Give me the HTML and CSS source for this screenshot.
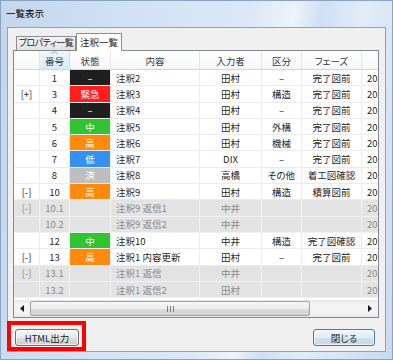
FILE: index.html
```html
<!DOCTYPE html>
<html>
<head>
  <meta charset="utf-8">
  <title>一覧表示</title>
  <link rel="stylesheet" href="styles.css">
</head>
<body>
  <div class="window">
    <div class="titlebar">一覧表示</div>

    <div class="client">
      <div class="tabs">
        <div class="tab">プロパティ一覧</div>
        <div class="tab active">注釈一覧</div>
      </div>

      <div class="panel">
        <div class="grid">
          <div class="row head">
            <div class="c"></div>
            <div class="c sorted">番号
              <svg class="sort" width="7" height="3" viewBox="0 0 7 3"><path d="M0.5 3 L3.5 0.5 L6.5 3" fill="none" stroke="#8fa3b8" stroke-width="1"/></svg>
            </div>
            <div class="c">状態</div>
            <div class="c">内容</div>
            <div class="c">入力者</div>
            <div class="c">区分</div>
            <div class="c">フェーズ</div>
            <div class="c"></div>
          </div>

          <div class="row">
            <div class="c"></div><div class="c">1</div><div class="c st black">–</div>
            <div class="c l">注釈2</div><div class="c">田村</div><div class="c">–</div><div class="c">完了図前</div><div class="c l">2013/01/10</div>
          </div>
          <div class="row">
            <div class="c">[+]</div><div class="c">3</div><div class="c st red">緊急</div>
            <div class="c l">注釈3</div><div class="c">田村</div><div class="c">構造</div><div class="c">完了図前</div><div class="c l">2013/01/10</div>
          </div>
          <div class="row">
            <div class="c"></div><div class="c">4</div><div class="c st black">–</div>
            <div class="c l">注釈4</div><div class="c">田村</div><div class="c">–</div><div class="c">完了図前</div><div class="c l">2013/01/10</div>
          </div>
          <div class="row">
            <div class="c"></div><div class="c">5</div><div class="c st green">中</div>
            <div class="c l">注釈5</div><div class="c">田村</div><div class="c">外構</div><div class="c">完了図前</div><div class="c l">2013/01/10</div>
          </div>
          <div class="row">
            <div class="c"></div><div class="c">6</div><div class="c st orange">高</div>
            <div class="c l">注釈6</div><div class="c">田村</div><div class="c">機械</div><div class="c">完了図前</div><div class="c l">2013/01/10</div>
          </div>
          <div class="row">
            <div class="c"></div><div class="c">7</div><div class="c st blue">低</div>
            <div class="c l">注釈7</div><div class="c">DIX</div><div class="c">–</div><div class="c">完了図前</div><div class="c l">2013/01/10</div>
          </div>
          <div class="row">
            <div class="c"></div><div class="c">8</div><div class="c st gray">済</div>
            <div class="c l">注釈8</div><div class="c">高橋</div><div class="c">その他</div><div class="c">着工図確認</div><div class="c l">2013/01/11</div>
          </div>
          <div class="row">
            <div class="c">[-]</div><div class="c">10</div><div class="c st orange">高</div>
            <div class="c l">注釈9</div><div class="c">田村</div><div class="c">構造</div><div class="c">積算図前</div><div class="c l">2013/01/11</div>
          </div>
          <div class="row sub">
            <div class="c">[-]</div><div class="c">10.1</div><div class="c"></div>
            <div class="c l">注釈9 返信1</div><div class="c">中井</div><div class="c"></div><div class="c"></div><div class="c l">2013/01/12</div>
          </div>
          <div class="row sub">
            <div class="c"></div><div class="c">10.2</div><div class="c"></div>
            <div class="c l">注釈9 返信2</div><div class="c">中井</div><div class="c"></div><div class="c"></div><div class="c l">2013/01/12</div>
          </div>
          <div class="row">
            <div class="c"></div><div class="c">12</div><div class="c st green">中</div>
            <div class="c l">注釈10</div><div class="c">中井</div><div class="c">構造</div><div class="c">完了図確認</div><div class="c l">2013/01/12</div>
          </div>
          <div class="row">
            <div class="c">[-]</div><div class="c">13</div><div class="c st orange">高</div>
            <div class="c l">注釈1 内容更新</div><div class="c">田村</div><div class="c">–</div><div class="c">完了図前</div><div class="c l">2013/01/13</div>
          </div>
          <div class="row sub">
            <div class="c">[-]</div><div class="c">13.1</div><div class="c"></div>
            <div class="c l">注釈1 返信</div><div class="c">中井</div><div class="c"></div><div class="c"></div><div class="c l">2013/01/13</div>
          </div>
          <div class="row sub">
            <div class="c"></div><div class="c">13.2</div><div class="c"></div>
            <div class="c l">注釈1 返信2</div><div class="c">田村</div><div class="c"></div><div class="c"></div><div class="c l">2013/01/14</div>
          </div>
        </div>

        <div class="hscroll">
          <div class="arrow">
            <svg width="4" height="7" viewBox="0 0 4 7"><path d="M4 0 L0 3.5 L4 7 Z" fill="#1a1a1a"/></svg>
          </div>
          <div class="thumb">
            <svg width="7" height="6" viewBox="0 0 7 6"><path d="M0.5 0 V6 M3.5 0 V6 M6.5 0 V6" stroke="#7d7d7d" stroke-width="1"/></svg>
          </div>
          <div class="arrow right">
            <svg width="4" height="7" viewBox="0 0 4 7"><path d="M0 0 L4 3.5 L0 7 Z" fill="#1a1a1a"/></svg>
          </div>
        </div>
      </div>

      <div class="footer">
        <div class="mark"><button class="btn export">HTML出力</button></div>
        <button class="btn close">閉じる</button>
      </div>
    </div>
  </div>
</body>
</html>
```

FILE: styles.css
```css
html, body {
    margin: 0;
    padding: 0;
}

body {
    width: 393px;
    height: 360px;
    overflow: hidden;
    font-family: "Noto Sans CJK JP", "Noto Sans", sans-serif;
    font-feature-settings: "palt";
    font-size: 9.5px;
    color: #262626;
}

/* window frame */
.window {
    height: 360px;
    box-sizing: border-box;
    display: flex;
    flex-direction: column;
    padding-bottom: 8px;
    background: linear-gradient(100deg, #c2d6ed 0%, #d2e2f4 30%, #dbe7f5 55%, #edf3fa 65%, #cfdff2 71%, #e2ecf8 80%, #c6daf0 100%);
    box-shadow: inset 0 0 0 1px #8aa3c0;
}

.titlebar {
    height: 27px;
    line-height: 26px;
    padding-left: 6px;
    font-size: 9.5px;
    color: #000;
}

.client {
    flex: 1;
    margin: 0 7px;
    background: #f0f0f0;
    border: 1px solid #8da3bc;
    display: flex;
    flex-direction: column;
}

/* tabs */
.tabs {
    display: flex;
    align-items: flex-end;
    height: 18px;
    margin: 5px 0 -1px 8px;
    position: relative;
    z-index: 1;
}

.tab {
    box-sizing: border-box;
    width: 60px;
    height: 14px;
    margin-bottom: 1px;
    line-height: 12px;
    text-align: center;
    white-space: nowrap;
    font-size: 9px;
    letter-spacing: -0.5px;
    border: 1px solid #898c95;
    border-bottom: none;
    background: linear-gradient(#f4f4f4, #e2e2e2);
    color: #222;
}

.tab.active {
    width: 46px;
    height: 18px;
    margin-bottom: 0;
    line-height: 16px;
    font-size: 9.5px;
    letter-spacing: 0;
    background: #fff;
}

/* list */
.panel {
    box-sizing: border-box;
    width: 366px;
    height: 268px;
    margin-left: 5px;
    border: 1px solid #828790;
    background: #fff;
}

.grid {
    display: grid;
    grid-template-columns: 26px 30px 41px 89px 62px 40px 60px 16px;
    grid-template-rows: 19px;
    grid-auto-rows: 16.3px;
    align-content: start;
    height: 249px;
    overflow: hidden;
}

.row {
    display: contents;
}

.c {
    box-sizing: border-box;
    display: flex;
    align-items: center;
    justify-content: center;
    white-space: nowrap;
    overflow: hidden;
    border-right: 1px solid #ebebeb;
    border-bottom: 1px solid #ebebeb;
}

.c.l {
    justify-content: flex-start;
    padding-left: 5px;
}

.c:last-child {
    padding-left: 5px;
    border-right: none;
}

.head .c {
    padding-top: 2px;
    background: linear-gradient(#fff, #f6f7f9);
    border-right-color: #e3e4e6;
    border-bottom-color: #d5d5d5;
    color: #3a3a3a;
}

.head .c.sorted {
    position: relative;
    background: linear-gradient(#eef6fd, #d9eafa);
    border-right-color: #c3dbf0;
}

.sort {
    position: absolute;
    top: 0;
    left: 11px;
}

.sub .c {
    background: #e3e3e3;
    border-color: #f1f1f1;
    color: #8a8a8a;
}

.st {
    color: #fff;
}
.st.black { background: #1f1f1f; }
.st.red { background: #ff1e1e; }
.st.green { background: #30c530; }
.st.orange { background: #ff8a0d; }
.st.blue { background: #3590f2; }
.st.gray { background: #bebebe; }

/* horizontal scrollbar */
.hscroll {
    display: flex;
    align-items: center;
    height: 17px;
    background: linear-gradient(#e6e6e6, #f3f3f3 25%, #f3f3f3 75%, #e8e8e8);
}

.arrow {
    width: 15px;
    height: 17px;
    display: flex;
    align-items: center;
    justify-content: center;
}

.arrow.right {
    width: 16px;
    margin-left: auto;
}

.thumb {
    box-sizing: border-box;
    width: 280px;
    height: 15px;
    margin-left: 1px;
    display: flex;
    align-items: center;
    justify-content: center;
    border: 1px solid #a2a2a2;
    border-radius: 2px;
    background: linear-gradient(#f6f6f6, #ececec 50%, #dcdcdc 51%, #d2d2d2);
}

/* buttons */
.footer {
    display: flex;
    align-items: flex-start;
    justify-content: space-between;
    margin-top: 3px;
    padding-right: 10px;
}

.mark {
    border: 4px solid #ff0000;
    padding: 4px 3px 1px 4px;
    margin-left: -1px;
    display: flex;
}

.btn {
    box-sizing: border-box;
    height: 17px;
    padding: 0;
    font-family: inherit;
    font-feature-settings: "palt";
    font-size: 9.5px;
    color: #1e1e1e;
    border: 1px solid #707070;
    border-radius: 3px;
    background: linear-gradient(#f3f3f3, #ebebeb 50%, #dddddd 51%, #cfcfcf);
    box-shadow: inset 0 0 0 1px rgba(255, 255, 255, 0.6);
}

.btn.export {
    width: 64px;
}

.btn.close {
    width: 62px;
    margin-top: 8px;
    border-color: #3c7fb1;
    background: linear-gradient(#eef5fa, #e2ecf4 50%, #d2e0eb 51%, #c8d9e6);
}
```
